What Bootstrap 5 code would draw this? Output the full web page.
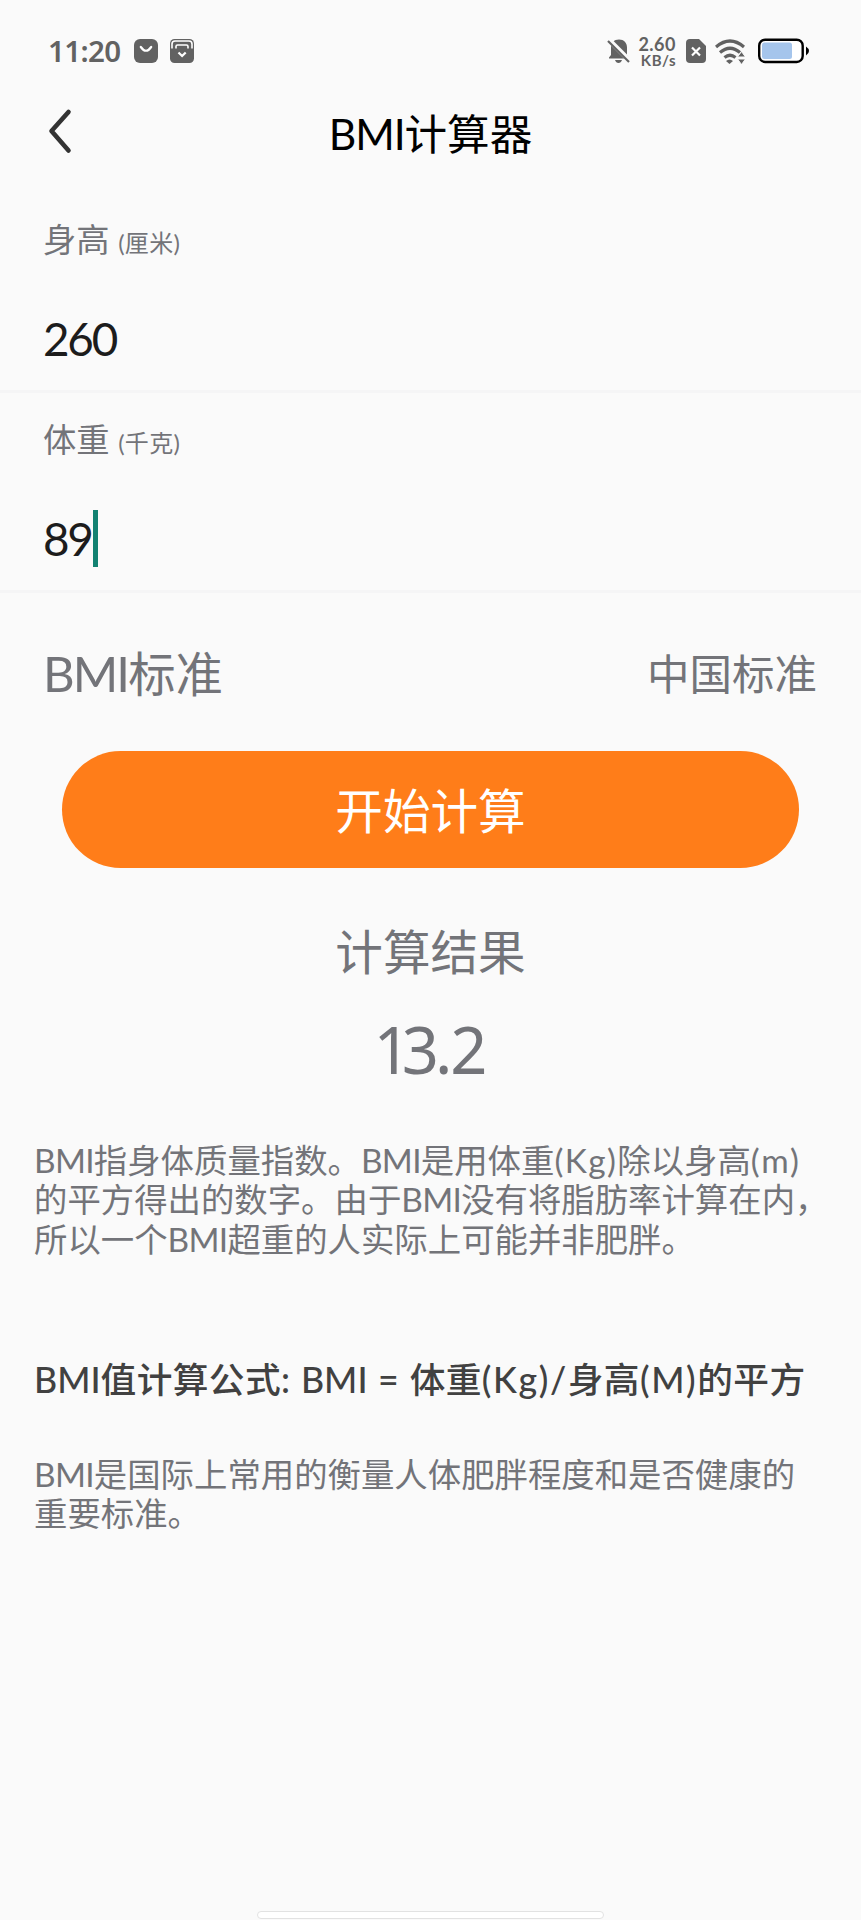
<!DOCTYPE html>
<html lang="zh-CN">
<head>
<meta charset="utf-8">
<meta name="viewport" content="width=device-width, initial-scale=1">
<title>BMI计算器</title>
<link rel="stylesheet" href="https://cdn.jsdelivr.net/npm/bootstrap@5.3.0/dist/css/bootstrap.min.css">
<style>
body{background:#fafafa;color:#737479;font-family:Lato,"Noto Sans CJK SC",sans-serif;height:1920px;overflow:hidden}
.status-bar{height:100px;padding:2px 51px 0 48px;color:#626262}
.clock{font-family:"Noto Sans",sans-serif;font-size:29.5px;font-weight:600;line-height:36px;width:86px;letter-spacing:-.6px}
.net-speed{font-size:18px;font-weight:700;line-height:18px;width:40px}
.net-speed div{margin-right:-5px;letter-spacing:.5px}
.net-speed div:last-child{font-size:15px;line-height:15px}
.app-head{height:67px;margin-bottom:26px;font-size:42.6px;line-height:67px;color:#000}
.app-head .abbr{letter-spacing:-1.1px}
.back-btn{left:48px;top:8px}
.field-box{height:200px;padding:24px 43px 0;border-bottom:3px solid #f5f5f6}
.field-label{font-size:33.3px;line-height:44px}
.unit{font-size:24px;letter-spacing:.3px}
.field-value{font-size:45.8px;line-height:57px;margin-top:45px;color:#1c1c1c;letter-spacing:-2.2px}
.caret{width:5px;height:57px;background:#128272;margin-left:1px}
.std-row{height:60px;margin-top:50px;padding:0 44px 0 43px;line-height:60px}
.std-name{font-size:47.4px}
.std-name .abbr{font-size:49px;letter-spacing:-1.9px}
.std-pick{font-size:42.5px;padding-top:1px}
.btn-calc{--bs-btn-color:#fff;--bs-btn-bg:#ff7d19;--bs-btn-hover-color:#fff;--bs-btn-hover-bg:#f37412;margin:48px 62px 0;height:117px;padding-top:8px;font-size:47.6px;line-height:1;border:0}
.result-title{font-size:47.6px;line-height:60px;margin-top:54px}
.result-num{font-family:"Noto Sans",sans-serif;font-size:65px;line-height:80px;margin-top:27px}
.result-num .int-1{letter-spacing:-9px}
.result-num .int-2{letter-spacing:-4px}
.result-num .dot{letter-spacing:-2px}
.note{font-size:33.4px;line-height:39.3px;padding-left:34px;white-space:nowrap}
.note .abbr{letter-spacing:-.7px}
.note .paren{letter-spacing:1.4px}
.formula{font-size:35.7px;line-height:50px;padding-left:34px;color:#414141;font-weight:500;white-space:nowrap;letter-spacing:.4px;word-spacing:1.1px}
.formula .abbr{letter-spacing:0}
.formula .paren{letter-spacing:1.6px}
.home-bar{left:257px;top:1911px;width:347px;height:8px;border:1px solid #e2e2e2;background:#fff}
</style>
</head>
<body class="position-relative">
<div class="status-bar d-flex align-items-center">
  <div class="clock">11:20</div>
  <svg width="24" height="24" viewBox="0 0 24 24"><rect width="24" height="24" rx="6" fill="#626262"/><path d="M6.800 8q5.200 7.500 10.400 0" fill="none" stroke="#fff" stroke-width="2.200" stroke-linecap="round"/></svg>
  <svg width="24" height="24" viewBox="0 0 24 24" style="margin-left:12px"><rect width="24" height="24" rx="4.500" fill="#626262"/><path d="M2 9.500V5q0-3 3-3h14q3 0 3 3v4.500M6 9.500V7.500q0-1.500 1.500-1.500h9q1.500 0 1.500 1.500v2" fill="none" stroke="#fff" stroke-width="1.600"/><path d="M8.500 13.500l3.600 3.500 3.600-3.500" fill="none" stroke="#fff" stroke-width="2.200"/></svg>
  <div class="d-flex align-items-center ms-auto">
    <svg width="24" height="26" viewBox="0 0 24 26"><path d="M12 1.500c5 0 8 3.500 8 8V17l2 2.500v1H2v-1L4 17V9.500c0-4.500 3-8 8-8zM8 22h7q-1 3-3.500 3T8 22z" fill="#626262"/><path d="M1.500 1.500l22 22" stroke="#fafafa" stroke-width="5"/><path d="M1 3l21 21" stroke="#626262" stroke-width="2.200"/></svg>
    <div class="net-speed text-end"><div>2.60</div><div>KB/s</div></div>
    <svg width="20" height="24" viewBox="0 0 20 24" style="margin-left:15px"><path d="M4 0h9l7 7v13q0 4-4 4H4q-4 0-4-4V4q0-4 4-4z" fill="#626262"/><path d="M6 8.500l8 8M14 8.500l-8 8" stroke="#fff" stroke-width="2.200"/></svg>
    <svg width="30" height="25" viewBox="0 0 30 25" style="margin-left:9px"><g fill="none" stroke="#626262" stroke-width="3.200"><path d="M1 8q14-12 28 0"/><path d="M5 13.500q10-8.500 20 0"/><path d="M9.500 18.500q5.500-4.500 11 0"/></g><path d="M11 22q3.500-3 7 0L14.500 25z" fill="#626262"/><path d="M26.500 12.500l4 5.500h-8zM26.500 25.500l4-5.500h-8z" fill="#626262" stroke="#fafafa" stroke-width="1"/></svg>
    <svg width="52" height="26" viewBox="0 0 52 26" style="margin-left:13px"><rect x="1.200" y="1.700" width="43.500" height="22.300" rx="6" fill="#fff" stroke="#000" stroke-width="2.400"/><rect x="4" y="4.500" width="30" height="16.500" rx="2.500" fill="#a5c5ec"/><path d="M48 8.500q3 2 3 4.500t-3 4.500z"/></svg>
  </div>
</div>

<header class="app-head position-relative text-center">
  <svg class="back-btn position-absolute" width="26" height="46" viewBox="0 0 26 46"><path d="M20.500 4L3.500 23l17 19.500" fill="none" stroke="#333" stroke-width="4.600" stroke-linecap="round" stroke-linejoin="round"/></svg>
  <span class="abbr">BMI</span>计算器
</header>

<main>
  <section class="field-box">
    <div class="field-label">身高 <span class="unit">(厘米)</span></div>
    <div class="field-value">260</div>
  </section>
  <section class="field-box">
    <div class="field-label">体重 <span class="unit">(千克)</span></div>
    <div class="field-value d-flex">89<span class="caret"></span></div>
  </section>

  <div class="std-row d-flex justify-content-between">
    <span class="std-name"><span class="abbr">BMI</span>标准</span>
    <span class="std-pick">中国标准</span>
  </div>

  <div class="d-grid"><button class="btn btn-calc rounded-pill" type="button">开始计算</button></div>

  <div class="result-title text-center">计算结果</div>
  <div class="result-num text-center"><span class="int-1">1</span><span class="int-2">3</span><span class="dot">.</span>2</div>

  <div class="note" style="margin-top:52px"><span class="abbr">BMI</span>指身体质量指数。<span class="abbr">BMI</span>是用体重<span class="paren">(Kg)</span>除以身高<span class="paren">(m)</span><br>的平方得出的数字。由于<span class="abbr">BMI</span>没有将脂肪率计算在内，<br>所以一个<span class="abbr">BMI</span>超重的人实际上可能并非肥胖。</div>
  <div class="formula" style="margin-top:96px"><span class="abbr">BMI</span>值计算公式: <span class="abbr">BMI</span> = 体重<span class="paren">(Kg)/</span>身高<span class="paren">(M)</span>的平方</div>
  <div class="note" style="margin-top:50px"><span class="abbr">BMI</span>是国际上常用的衡量人体肥胖程度和是否健康的<br>重要标准。</div>
</main>
<div class="home-bar position-absolute rounded-pill"></div>
<script src="https://cdn.jsdelivr.net/npm/bootstrap@5.3.0/dist/js/bootstrap.bundle.min.js"></script>
</body>
</html>
